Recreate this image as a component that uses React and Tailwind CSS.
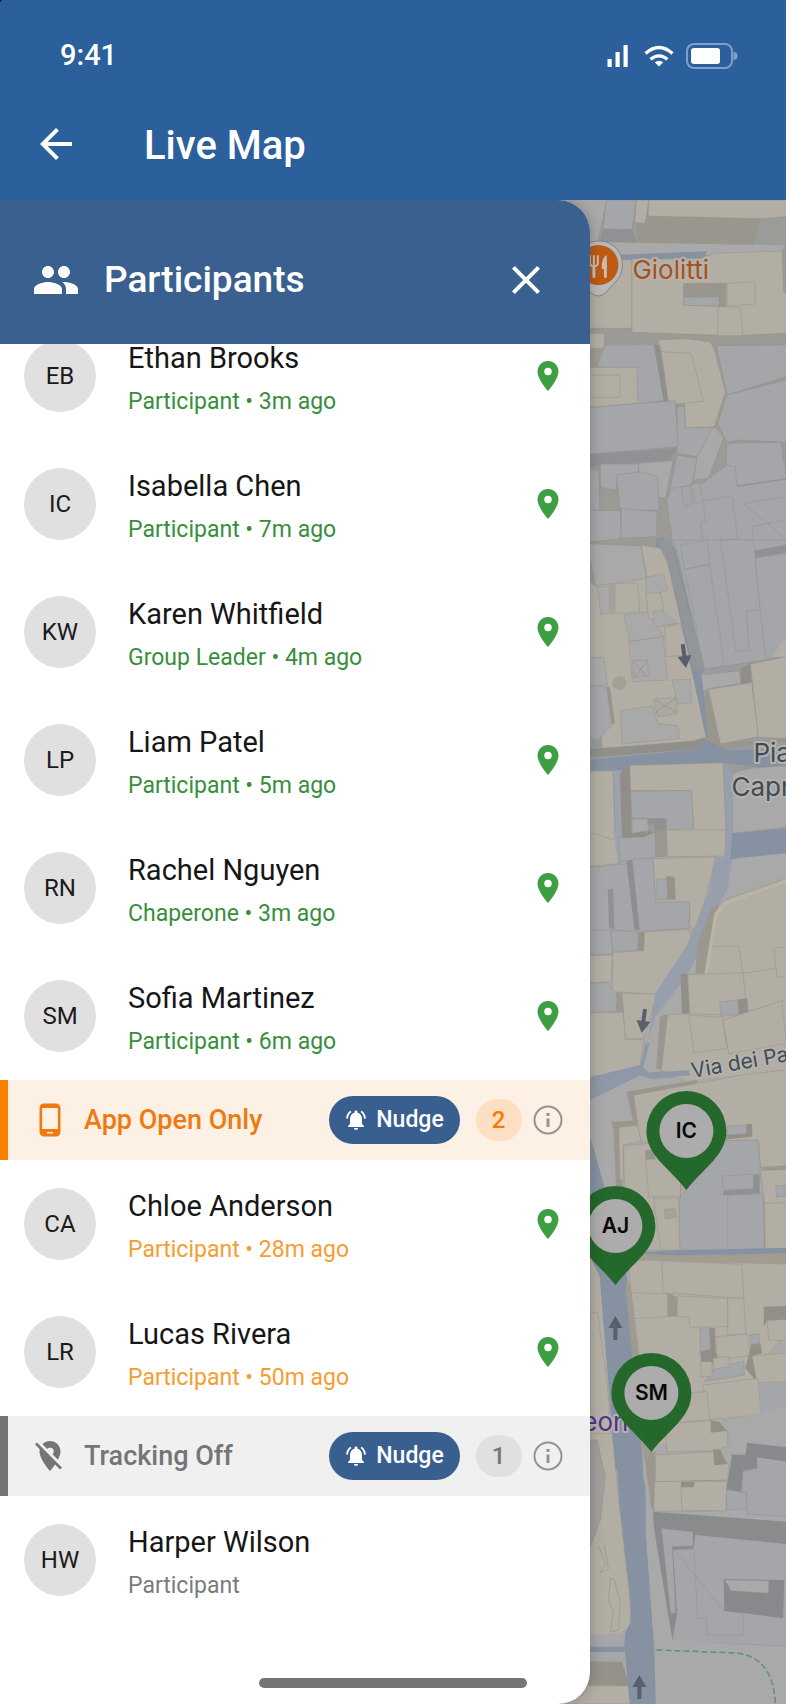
import React from "react";
import {
  MdArrowBack,
  MdPeople,
  MdClose,
  MdLocationOn,
  MdLocationOff,
  MdPhoneAndroid,
  MdNotificationsActive,
} from "react-icons/md";

const SAND = "#b2aea4";
const SAND_SHADE = "#99968d";
const STONE = "#a5a6a9";
const STONE_SHADE = "#8f9194";
const PLAZA = "#a9a9aa";
const ROAD = "#8691a1";
const LANE = "#989fac";
const EDGE = "#8e8c86";

// Building and street outlines, grouped by map tile. Points are in thirds of a unit from the tile origin.
const TILES = [
  {
    x: 580,
    y: 190,
    shapes: [
      ["#9b9a95", "-300,0 618,0 618,1080 -300,1080"],
      [PLAZA, "-60,30 78,30 50,160 -60,160"],
      [SAND_SHADE, "168,78 618,85 618,172 170,160"],
      ["#9b9b97", "540,85 618,82 618,170 520,165"],
      [SAND, "205,30 618,30 618,80 540,86 203,78", 1],
      [STONE, "78,30 168,30 155,118 68,116", 1],
      [SAND, "168,30 205,30 195,100 163,98", 1],
      [STONE_SHADE, "68,118 155,120 172,160 56,156"],
      [PLAZA, "40,156 612,166 606,184 380,194 40,196"],
      [ROAD, "120,194 380,184 370,204 128,210"],
      [SAND, "0,205 155,210 155,415 0,415", 1],
      [SAND, "155,206 360,206 400,190 605,183 610,305 618,312 618,430 465,437 155,427", 1],
      [SAND_SHADE, "308,280 438,278 438,350 410,350 308,345"],
      [STONE, "308,322 416,320 416,348 308,346", 1],
      [SAND, "440,280 523,275 525,342 440,348", 1],
      [SAND, "413,350 480,352 487,437 411,437", 1],
      [SAND, "0,430 72,430 72,475 0,475", 1],
      ["#a09b91", "30,475 72,475 60,512 30,505"],
      [STONE, "76,467 222,465 250,630 170,640 165,532 50,530"],
      ["#8f8f8c", "220,465 236,465 264,632 250,634"],
      ["#b0ada2", "0,532 170,532 172,640 0,655", 1],
      ["#b0ada2", "0,555 118,555 118,622 0,622", 1],
      [SAND, "232,450 320,446 390,456 402,480 435,605 402,710 316,714 312,640 265,645 243,485", 1],
      [SAND, "243,485 332,490 370,634 265,645", 1],
      [STONE, "408,467 618,465 618,560 440,615", 1],
      [STONE, "440,615 618,570 618,757 480,750 440,757 412,700", 1],
      [STONE, "290,650 312,650 316,714 400,712 350,800 290,790", 1],
      [STONE, "0,655 285,632 293,770 0,795", 1],
      [STONE_SHADE, "0,797 293,774 270,810 0,830"],
      [PLAZA, "400,710 430,742 385,865 340,870 350,800", 1],
      [STONE, "290,795 350,805 335,880 262,930", 1],
      [STONE, "440,760 602,757 618,865 470,887 437,830", 1],
      [STONE, "60,822 175,822 175,850 110,855 108,900 60,892", 1],
      [PLAZA, "175,820 278,812 255,925 232,920 230,860 175,850", 1],
      [STONE, "108,855 180,845 232,860 235,960 120,962", 1],
      [STONE, "0,840 55,840 58,960 0,960", 1],
      [STONE, "0,960 120,962 122,1045 0,1060", 1],
      [STONE, "122,955 230,965 228,1040 122,1045", 1],
      [STONE, "258,930 275,895 365,880 440,825 465,830 470,890 618,868 618,1080 280,1080", 1],
      [STONE, "303,890 328,888 335,940 312,950", 1],
      [STONE, "333,882 358,880 368,935 343,940", 1],
      [STONE, "368,932 455,918 472,1045 425,1052 428,1080 372,1080 360,1000 375,995", 1],
      [STONE, "490,940 618,920 618,990 515,1010 520,1060 618,1050", 1],
      [ROAD, "230,1045 250,1040 262,1080 225,1080"],
    ],
  },
  {
    x: 580,
    y: 540,
    shapes: [
      ["#999b9d", "-300,30 618,30 618,900 -300,900"],
      [STONE, "282,0 618,0 618,350 370,388", 1],
      [STONE, "300,15 380,0 388,72 312,88", 1],
      [STONE, "312,88 388,74 432,378 372,388", 1],
      [STONE, "420,0 520,0 540,210 498,212 506,330 466,335", 1],
      [STONE_SHADE, "522,32 618,14 618,38 524,54"],
      [STONE, "524,54 618,40 618,350 556,356 540,210", 1],
      [PLAZA, "0,10 182,18 200,120 45,138 30,60", 1],
      [SAND, "182,16 240,24 262,70 380,590 350,610 65,625 60,560 0,590 0,100 45,138 200,115", 1],
      [PLAZA, "196,112 250,102 262,150 240,158 248,215 292,250 222,262 200,205", 1],
      [SAND, "88,132 172,128 178,215 92,222", 1],
      ["#a5a29a", "88,132 106,132 106,220 92,222"],
      [PLAZA, "50,142 86,138 88,220 62,225", 1],
      [PLAZA, "130,225 196,215 252,290 148,305", 1],
      [SAND, "196,160 240,158 250,210 218,215 222,240 205,235", 1],
      [PLAZA, "145,305 248,290 262,420 156,425", 1],
      ["#a9a8a4", "158,362 202,360 204,408 160,412", 1],
      [SAND, "252,262 300,250 328,345 258,350", 1],
      [PLAZA, "275,420 330,418 334,488 292,492", 1],
      ["#aca9a2", "218,478 285,472 292,520 232,530", 1],
      [PLAZA, "120,512 215,498 232,550 292,558 298,595 125,612", 1],
      [STONE, "0,440 78,440 98,550 55,600 0,585", 1],
      [PLAZA, "0,355 70,352 82,435 0,438", 1],
      ["#97958f", "78,440 88,440 104,548 92,552"],
      ["#918f8b", "0,630 340,602 378,590 350,625 240,635 0,655"],
      [SAND, "575,350 618,290 618,352"],
      [PLAZA, "360,405 476,393 482,430 388,445 368,455", 1],
      ["#918e88", "480,385 508,372 514,425 482,432"],
      [SAND, "384,448 514,428 534,590 420,612", 1],
      [SAND, "510,372 618,350 618,595 534,592", 1],
      [SAND_SHADE, "370,470 384,450 420,612 618,594 618,605 410,628 378,595"],
      [ROAD, "252,0 282,20 372,388 362,405 372,470 382,590 350,625 240,640 0,662 0,690 120,692 430,668 618,690 618,628 440,630 378,600 340,420 262,60"],
      ["#929699", "232,0 270,0 372,388 340,390 262,60"],
      [PLAZA, "456,700 500,686 618,676 618,862 456,880", 1],
      [LANE, "430,668 456,690 456,880 438,900 434,800"],
      [ROAD, "450,882 618,866 618,900 440,900"],
      [SAND, "0,695 98,692 104,900 0,900", 1],
      ["#9ea2ac", "100,692 122,690 128,900 108,900"],
      ["#918e88", "118,700 150,676 152,880 195,870 195,885 125,895"],
      [SAND, "148,676 428,668 438,900 230,900 255,866 340,864 332,752 150,752", 1],
      [STONE, "150,754 333,752 340,866 258,868 255,836 155,836", 1],
      [PLAZA, "155,836 202,836 204,872 155,880", 1],
      [STONE_SHADE, "202,836 258,836 258,900 222,900 222,852 202,852"],
    ],
  },
  {
    x: 580,
    y: 830,
    shapes: [
      [PLAZA, "-300,28 618,28 618,900 -300,900"],
      [SAND, "0,0 108,30 118,100 0,112", 1],
      ["#9ea2ac", "98,0 115,0 122,96 114,100"],
      [STONE, "115,20 225,8 225,82 155,90 118,96", 1],
      ["#908e8a", "125,10 190,12 215,0 212,12 190,22 125,24"],
      ["#9b978e", "225,0 258,0 260,80 225,82"],
      [SAND, "258,0 435,0 435,78 262,80", 1],
      [STONE, "0,115 150,100 170,305 100,300 0,305", 1],
      [STONE_SHADE, "82,178 98,176 102,298 86,295"],
      ["#8d8e90", "138,92 156,90 178,300 162,300"],
      [STONE, "155,88 218,84 226,215 328,215 326,295 178,304", 1],
      [SAND, "218,86 405,80 380,190 345,300 328,290 328,215 226,216", 1],
      [STONE, "228,148 260,145 262,208 230,210", 1],
      ["#979389", "258,138 282,140 286,208 262,210"],
      [STONE, "0,302 90,300 98,372 0,375", 1],
      [STONE, "92,302 172,304 172,360 98,365", 1],
      ["#979389", "175,305 192,308 190,362 172,362"],
      [SAND, "98,368 190,362 192,306 326,298 335,330 225,492 95,485", 1],
      [SAND, "0,378 96,375 92,455 0,460", 1],
      [STONE, "0,460 80,458 110,490 108,545 0,548", 1],
      [SAND, "125,490 228,492 210,560 190,625 135,628", 1],
      ["#9b978e", "108,488 125,488 130,545 108,545"],
      [SAND, "0,548 128,548 135,628 190,628 180,705 60,745 0,762", 1],
      [LANE, "405,80 450,88 440,180 410,235 360,360 320,435 225,560 200,640 180,700 205,620 225,490 320,345 385,190"],
      [LANE, "440,0 456,0 456,90 440,182 420,180"],
      [ROAD, "456,10 618,0 618,70 470,85 450,90"],
      ["#8e98a6", "0,748 180,705 195,640 208,640 188,712 205,728 325,716 335,738 215,746 180,736 30,806 0,820"],
      [SAND, "385,430 410,240 432,210 618,145 618,900 240,720 262,555 325,550 320,432", 1],
      [SAND, "385,350 475,348 488,430 382,438", 1],
      ["#9b978e", "350,345 390,240 418,215 372,430 345,428"],
      ["#bab5a6", "372,432 402,250 430,215 618,150 618,158 436,224 412,255 382,436"],
      [SAND, "322,434 488,428 508,555 328,552", 1],
      ["#928f88", "300,432 320,432 328,550 305,552"],
      ["#9b978e", "238,560 262,552 244,720 228,716"],
      [SAND, "488,430 618,410 618,510 500,545", 1],
      [STONE, "418,515 475,510 478,552 422,560", 1],
      ["#928f88", "472,508 500,505 505,552 475,552"],
      [SAND, "325,555 425,562 440,655 340,668", 1],
      [SAND, "428,570 604,512 618,640 445,672", 1],
      [SAND, "580,355 618,350 618,440 590,442", 1],
    ],
  },
  {
    x: 580,
    y: 1070,
    shapes: [
      [PLAZA, "-300,90 330,30 618,0 618,1200 -300,1200"],
      ["#8e98a6", "0,100 0,30 60,20 180,0 195,10 325,0 330,16 215,26 180,16 30,90"],
      [SAND_SHADE, "138,65 350,30 350,50 160,82 180,215 130,220 125,380 108,380 100,180 92,155 158,152"],
      [SAND, "160,75 502,12 618,0 618,290 540,292 535,210 180,215", 1],
      [SAND, "115,172 172,165 182,215 130,225 128,330 118,330", 1],
      [SAND, "130,228 225,218 300,300 300,540 135,540", 1],
      ["#98948b", "195,240 225,240 225,268 195,268"],
      [SAND, "196,268 300,268 300,380 205,380", 1],
      [STONE, "440,168 500,164 500,192 440,195", 1],
      ["#928f88", "498,162 515,162 516,200 420,210 420,196 498,192"],
      [STONE, "298,385 330,345 430,212 530,210 540,290 535,375 552,400 552,540 298,540", 1],
      [STONE, "425,318 518,312 520,355 428,360", 1],
      ["#8f9092", "428,362 520,356 520,314 536,312 538,370 445,375 428,375"],
      [STONE, "442,376 548,372 552,535 442,540", 1],
      ["#9c988f", "542,292 618,285 618,300 545,300"],
      [SAND, "540,302 618,298 618,400 552,400", 1],
      [SAND, "552,400 618,398 618,535 555,535", 1],
      [STONE, "586,348 614,345 616,380 588,380", 1],
      [SAND, "220,385 295,385 298,540 240,540", 1],
      ["#a5a29a", "252,418 285,415 288,442 255,446", 1],
      ["#a29c91", "130,555 618,550 618,582 240,570 140,570"],
      [ROAD, "190,545 330,540 618,534 618,550 430,554 290,556 190,553"],
      [SAND, "142,570 618,582 618,790 560,860 620,940 530,940 440,1200 200,1200 160,745", 1],
      [SAND, "245,572 485,583 490,685 248,668", 1],
      [SAND, "152,668 262,672 262,740 158,746", 1],
      ["#9b978e", "262,668 290,680 290,738 262,742"],
      [SAND, "292,678 442,685 442,770 328,772 326,742 290,738", 1],
      [SAND, "442,685 490,685 496,792 442,795", 1],
      [STONE, "358,775 386,772 390,835 360,850", 1],
      ["#928f88", "386,775 404,775 406,850 425,855 425,880 362,880 360,845 390,838"],
      [SAND, "405,800 500,792 512,855 448,865 410,862", 1],
      ["#928f88", "550,710 618,708 618,750 560,750 550,770"],
      [SAND, "560,752 618,748 618,812 565,810", 1],
      [STONE, "508,795 535,792 538,820 512,825", 1],
      ["#928f88", "512,825 540,820 545,850 515,858 530,935 495,895"],
      [SAND, "515,858 618,848 618,935 530,938", 1],
      [STONE, "400,898 490,872 492,915 372,935", 1],
      [SAND, "360,875 395,875 395,918 362,920", 1],
      [SAND, "398,865 445,858 448,890 400,898", 1],
      [SAND, "368,945 532,925 542,1035 388,1048", 1],
      [SAND, "325,968 380,965 388,1048 300,1056", 1],
      [STONE, "540,938 618,938 618,1120 500,1120 430,1200 440,1080 420,1048 542,1035"],
    ],
  },
  {
    x: 580,
    y: 1400,
    shapes: [
      [PLAZA, "195,150 450,60 618,20 618,912 195,912"],
      [SAND, "255,72 390,62 442,95 442,140 398,152 260,155", 1],
      ["#928f88", "390,60 418,65 438,92 392,98"],
      [SAND, "225,165 400,155 445,195 442,240 225,245", 1],
      ["#928f88", "398,148 420,150 440,192 402,196"],
      [SAND, "222,245 440,242 436,332 220,334", 1],
      [SAND, "302,258 345,244 440,244 436,332 304,332", 1],
      ["#928f88", "302,245 342,245 340,262 302,262"],
      ["#9b978e", "188,155 225,155 220,335 205,310 195,200"],
      [STONE, "450,165 490,160 618,160 618,350 500,342 498,278 485,275 488,215 530,205 528,180", 1],
      ["#87898c", "500,128 618,142 618,185 530,172 530,205 488,212 482,275 438,268 455,165 495,165"],
      [STONE, "438,270 498,278 498,325 440,330", 1],
      [STONE, "240,385 618,410 618,738 278,724", 1],
      ["#8a8b8d", "218,335 618,365 618,432 345,405 340,445 278,450 290,640 276,720 250,640 220,385"],
      [STONE, "243,385 338,395 338,438 276,440 286,640 270,640", 1],
      [STONE, "282,450 340,448 352,655 378,655 380,705 490,705 488,640 430,632", 1],
      ["#87898c", "430,538 612,540 608,655 432,632"],
      [PLAZA, "432,540 565,542 565,580 450,572 445,558", 1],
    ],
  },
  {
    x: 580,
    y: 1070,
    shapes: [
      [SAND, "-300,200 30,180 60,640 100,1200 -300,1200"],
      ["#a19f99", "-300,100 30,100 30,720 -300,720"],
      [ROAD, "30,200 75,360 140,620 160,820 190,1200 105,1200 58,620 30,560"],
      ["#b5b0a5", "30,725 52,730 82,960 100,1200 30,1200", 1],
      ["#a09b92", "134,640 150,640 180,880 215,1140 190,1200"],
    ],
  },
  {
    x: 580,
    y: 1400,
    shapes: [
      [SAND, "-300,100 95,100 115,300 152,630 148,680 100,718 -300,718", 1],
      ["#a09f9b", "-300,120 50,120 75,230 60,360 30,440 -300,440", 1],
      [STONE, "-300,718 135,700 135,742 -300,742"],
      [STONE, "-300,755 135,755 130,785 -300,785"],
      ["#959389", "-300,782 125,785 148,858 -300,850"],
      [SAND, "-300,855 148,858 150,912 -300,912", 1],
      [ROAD, "-300,740 133,740 133,756 -300,756"],
      [ROAD, "102,95 182,130 190,240 196,260 196,400 222,750 226,912 148,912 132,740 134,700 152,665 150,600 118,320"],
      [PLAZA, "184,130 196,200 220,380 276,720 618,742 618,752 222,748 198,400 196,262 190,240"],
    ],
  },
];

const ARROWS = [
  { x: 684, y: 656, angle: 172 },
  { x: 643, y: 1021, angle: 188 },
  { x: 615, y: 1328, angle: 0 },
  { x: 639, y: 1687, angle: 0 },
];

const PINS = [
  { id: "IC", x: 686, y: 1131 },
  { id: "AJ", x: 615, y: 1226 },
  { id: "SM", x: 651, y: 1393 },
];

function StreetMap() {
  return (
    <svg
      className="absolute right-0 top-0 h-full w-2/5 font-['Inter',sans-serif]"
      viewBox="471.6 200 314.4 1504"
      preserveAspectRatio="xMaxYMin slice"
      role="img"
      aria-label="Map"
    >
      {TILES.map((tile, i) => (
        <g key={i} transform={`translate(${tile.x} ${tile.y}) scale(0.33334)`}>
          {tile.shapes.map(([fill, points, outlined], j) => (
            <polygon
              key={j}
              points={points}
              fill={fill}
              stroke={outlined ? EDGE : "none"}
              strokeOpacity="0.5"
              strokeWidth="2.5"
              strokeLinejoin="round"
            />
          ))}
        </g>
      ))}

      <g fill="none" stroke="#8e8c86" strokeWidth="0.8" opacity="0.7">
        <path d="M634 662l13 15M647 661l-13 16M654 700l22 12M676 698l-22 15" />
        <path d="M598 1545l7 18-5 10 8-4-4-24M610 1578l-2 22 5 12-3 20 8-2 2-28-6-22z" />
        <circle cx="619" cy="683" r="7" fill="#9d9a92" stroke="none" />
      </g>
      <path
        d="M656 1650l80 3q37 4 39 51"
        fill="none"
        stroke="#5c8f7e"
        strokeWidth="1.5"
        strokeDasharray="6 3"
      />

      {ARROWS.map((a) => (
        <path
          key={a.y}
          transform={`translate(${a.x} ${a.y}) rotate(${a.angle})`}
          d="M0-12L7 0H2V12H-2V0H-7Z"
          fill="#59606b"
        />
      ))}

      <g>
        <path
          d="M598 241c14 0 24 10 24 24 0 8-3 13-8 18l-9 10q-7 6-14 0l-9-10c-5-5-8-10-8-18 0-14 10-24 24-24z"
          fill="#b9b9b9"
          stroke="#868480"
          strokeWidth="1"
        />
        <circle cx="598" cy="265" r="20" fill="#bf5a13" />
        <g fill="none" stroke="#c6bdb4" strokeLinecap="round" strokeLinejoin="round">
          <path d="M589.500 256v7q0 3 4 3t4-3v-7M593.500 256v8" strokeWidth="2" />
          <path d="M593.500 266v10.500M605 266v10.500" strokeWidth="3" />
        </g>
        <path d="M606.500 255v14h-5q-1-11 5-14z" fill="#c6bdb4" />
      </g>
      <g strokeLinejoin="round" paintOrder="stroke" strokeWidth="4" stroke="#b5b3ad">
        <text x="632" y="279" fontSize="26" fill="#a9501a">Giolitti</text>
        <g fill="#3f4c57">
          <text x="753" y="762" fontSize="26">Pia</text>
          <text x="731" y="796" fontSize="26">Capr</text>
          <text x="692" y="1078" fontSize="21" transform="rotate(-10 692 1078)">Via dei Pa</text>
        </g>
        <text x="628" y="1431" fontSize="26" textAnchor="end" fill="#553089">eon</text>
      </g>

      {PINS.map((pin) => (
        <g key={pin.id} transform={`translate(${pin.x} ${pin.y})`}>
          <path
            d="M-40 0A40 40 0 0 1 40 0C40 24 18 36 0 59C-18 36-40 24-40 0Z"
            fill="#25682b"
          />
          <circle r="27" fill="#abacab" />
          <text y="7" fontSize="21" fontWeight="600" textAnchor="middle" fill="#080808">
            {pin.id}
          </text>
        </g>
      ))}
    </svg>
  );
}

function StatusIcons() {
  return (
    <svg className="h-8 w-[132px]" viewBox="607 40 132 32" role="img" aria-label="Signal, Wi-Fi and battery">
      <g fill="#fff">
        <rect x="608.500" y="59" width="4.200" height="8" rx="0.500" />
        <rect x="616.500" y="52" width="4.200" height="15" rx="0.500" />
        <rect x="624.500" y="45" width="4.200" height="22" rx="0.500" />
        <path d="M660 66.500l-4.200-4.200q4.200-3 8.400 0z" />
        <rect x="692" y="48" width="29" height="16" rx="3" />
      </g>
      <g fill="none" stroke="#fff" strokeWidth="3.200">
        <path d="M646.500 53.500q13.500-12 27 0" />
        <path d="M651.500 59.300q8.500-7 17 0" />
      </g>
      <rect x="688" y="44" width="45" height="24" rx="7" fill="none" stroke="#7da0c8" strokeWidth="2" />
      <path d="M734.500 52q4 0 4 4t-4 4z" fill="#7da0c8" />
    </svg>
  );
}

function InfoIcon() {
  return (
    <svg className="size-9" viewBox="0 0 36 36" fill="none" stroke="currentColor" strokeWidth="2" aria-hidden="true">
      <circle cx="18" cy="18" r="13.500" />
      <path d="M18 16.500v8.500M18 11v3" strokeWidth="3" />
    </svg>
  );
}

const LIVE = [
  ["EB", "Ethan Brooks", "Participant • 3m ago"],
  ["IC", "Isabella Chen", "Participant • 7m ago"],
  ["KW", "Karen Whitfield", "Group Leader • 4m ago"],
  ["LP", "Liam Patel", "Participant • 5m ago"],
  ["RN", "Rachel Nguyen", "Chaperone • 3m ago"],
  ["SM", "Sofia Martinez", "Participant • 6m ago"],
];
const APP_OPEN = [
  ["CA", "Chloe Anderson", "Participant • 28m ago"],
  ["LR", "Lucas Rivera", "Participant • 50m ago"],
];
const OFF = [["HW", "Harper Wilson", "Participant"]];

function People({ people, tone, located = true }) {
  return (
    <ul>
      {people.map(([initials, name, detail]) => (
        <li key={initials} className="flex h-32 items-center pl-6 pr-6">
          <span className="flex size-[72px] shrink-0 items-center justify-center rounded-full bg-[#e0e0e0] text-2xl text-[#1b1b1b]">
            {initials}
          </span>
          <div className="ml-8 min-w-0 flex-1 pt-2">
            <p className="truncate text-[29px] leading-[44px] text-[#161616]">{name}</p>
            <p className={"truncate text-[23px] leading-[44px] " + tone}>{detail}</p>
          </div>
          {located && <MdLocationOn className="size-9 shrink-0 text-[#3e9e43]" aria-label="Location available" />}
        </li>
      ))}
    </ul>
  );
}

function SectionBar({ icon: Icon, title, count, bar, badge }) {
  return (
    <div className={"flex h-20 items-center border-l-8 pl-6 pr-6 " + bar}>
      <Icon className="size-9 shrink-0" aria-hidden="true" />
      <h2 className="ml-4 min-w-0 flex-1 truncate text-[27px] font-medium">{title}</h2>
      <button
        type="button"
        className="flex h-12 w-[131px] shrink-0 items-center justify-center gap-2 rounded-full bg-[#395f8f] text-[23px] font-medium text-white"
      >
        <MdNotificationsActive className="size-6" aria-hidden="true" />
        Nudge
      </button>
      <span className={"ml-4 flex h-[42px] w-[46px] shrink-0 items-center justify-center rounded-full text-2xl font-medium " + badge}>
        {count}
      </span>
      <button type="button" className="ml-2 shrink-0 text-[#969290]" aria-label={"About " + title}>
        <InfoIcon />
      </button>
    </div>
  );
}

export default function App() {
  return (
    <div className="flex min-h-screen flex-col bg-black font-['Roboto',sans-serif]">
      <header className="flex h-[200px] flex-col rounded-tl-[3px] bg-[#2b609c] text-white">
        <div className="flex h-28 items-center justify-between pb-px pl-[60px] pr-12">
          <span className="text-[29px] font-medium">9:41</span>
          <StatusIcons />
        </div>
        <div className="flex items-start gap-16 pl-8 pt-2">
          <button type="button" aria-label="Back">
            <MdArrowBack className="size-12" />
          </button>
          <h1 className="text-[40px] font-medium leading-[52px]">Live Map</h1>
        </div>
      </header>

      <main className="relative flex flex-1 overflow-hidden bg-[#a9a9aa]">
        <StreetMap />
        <aside className="relative flex w-3/4 flex-col overflow-hidden rounded-r-[32px] bg-white shadow-[0_0_14px_rgba(0,0,0,0.25)]">
          <div className="z-10 flex h-36 shrink-0 items-center bg-[#3a608f] pl-8 pr-10 pt-4 text-white">
            <MdPeople className="size-12" aria-hidden="true" />
            <h2 className="ml-6 flex-1 text-[37px] font-medium">Participants</h2>
            <button type="button" aria-label="Close participants">
              <MdClose className="size-12" />
            </button>
          </div>
          <div className="-mt-8 flex-1 pb-20">
            <People people={LIVE} tone="text-[#388e3c]" />
            <SectionBar
              icon={MdPhoneAndroid}
              title="App Open Only"
              count={2}
              bar="border-[#fb7f00] bg-[#fdf1e6] text-[#f07a10]"
              badge="bg-[#fddfc3] text-[#f57c00]"
            />
            <People people={APP_OPEN} tone="text-[#f79c31]" />
            <SectionBar
              icon={MdLocationOff}
              title="Tracking Off"
              count={1}
              bar="border-[#757575] bg-[#f0f0f0] text-[#757575]"
              badge="bg-[#e0e0e0] text-[#757575]"
            />
            <People people={OFF} tone="text-[#7b7b7b]" located={false} />
          </div>
        </aside>
        <div className="absolute bottom-4 left-1/2 h-[10px] w-[268px] -translate-x-1/2 rounded-full bg-[#757575]" />
      </main>
    </div>
  );
}
